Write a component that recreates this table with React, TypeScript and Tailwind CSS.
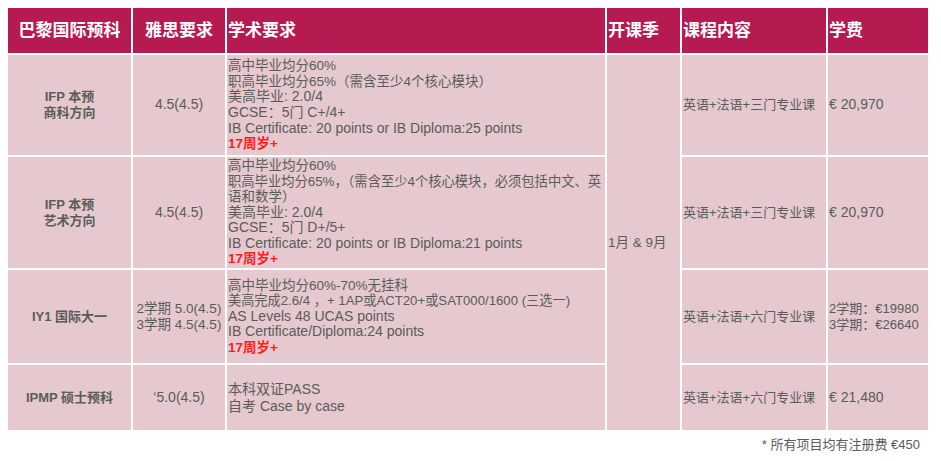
import React from "react";

const font = { fontFamily: '"Liberation Sans", "Noto Sans CJK SC", sans-serif' };

function Red() {
  return <div className="font-bold text-[13.5px] text-[#ff1c1c]">17周岁+</div>;
}

export default function App() {
  const th = "bg-[#b51a50] text-white text-[17px] font-bold align-middle p-0 px-px";
  const td = "bg-[#e6c9ce] text-[#5b5b5b] text-[13.5px] align-middle p-0";

  return (
    <div className="w-[941px] h-[461px] bg-white pl-[6px] pt-[6px]" style={font}>
      <table className="table-fixed border-separate border-spacing-[2px] w-[924px]">
        <colgroup>
          <col className="w-[123px]" />
          <col className="w-[92px]" />
          <col className="w-[378px]" />
          <col className="w-[73px]" />
          <col className="w-[144px]" />
          <col className="w-[100px]" />
        </colgroup>
        <thead>
          <tr className="h-[45px]">
            <th className={`${th} text-center`}>巴黎国际预科</th>
            <th className={`${th} text-center`}>雅思要求</th>
            <th className={`${th} text-left`}>学术要求</th>
            <th className={`${th} text-left`}>开课季</th>
            <th className={`${th} text-left`}>课程内容</th>
            <th className={`${th} text-left`}>学费</th>
          </tr>
        </thead>
        <tbody className="leading-[15.6px]">
          <tr className="h-[100px]">
            <td className={`${td} text-center font-bold text-[13px]`}>
              IFP 本预
              <br />
              商科方向
            </td>
            <td className={`${td} text-center text-[14px]`}>4.5(4.5)</td>
            <td className={`${td} px-px whitespace-nowrap`}>
              <div>高中毕业均分60%</div>
              <div>职高毕业均分65%（需含至少4个核心模块）</div>
              <div className="text-[14px]">美高毕业: 2.0/4</div>
              <div className="text-[14px]">GCSE：5门 C+/4+</div>
              <div className="text-[14px]">IB Certificate: 20 points or IB Diploma:25 points</div>
              <Red />
            </td>
            <td className={`${td} px-px`} rowSpan={4}>
              1月 &amp; 9月
            </td>
            <td className={`${td} px-px text-[13px]`}>英语+法语+三门专业课</td>
            <td className={`${td} px-px text-[14px]`}>€ 20,970</td>
          </tr>
          <tr className="h-[111px]">
            <td className={`${td} text-center font-bold text-[13px]`}>
              IFP 本预
              <br />
              艺术方向
            </td>
            <td className={`${td} text-center text-[14px]`}>4.5(4.5)</td>
            <td className={`${td} px-px whitespace-nowrap`}>
              <div>高中毕业均分60%</div>
              <div className="text-[13.3px]">职高毕业均分65%，（需含至少4个核心模块，必须包括中文、英</div>
              <div>语和数学）</div>
              <div className="text-[14px]">美高毕业: 2.0/4</div>
              <div className="text-[14px]">GCSE：5门 D+/5+</div>
              <div className="text-[14px]">IB Certificate: 20 points or IB Diploma:21 points</div>
              <Red />
            </td>
            <td className={`${td} px-px text-[13px]`}>英语+法语+三门专业课</td>
            <td className={`${td} px-px text-[14px]`}>€ 20,970</td>
          </tr>
          <tr className="h-[93px]">
            <td className={`${td} text-center font-bold text-[13px]`}>IY1 国际大一</td>
            <td className={`${td} text-center`}>
              2学期 5.0(4.5)
              <br />
              3学期 4.5(4.5)
            </td>
            <td className={`${td} px-px whitespace-nowrap`}>
              <div>高中毕业均分60%-70%无挂科</div>
              <div className="text-[13.2px]">美高完成2.6/4 ，+ 1AP或ACT20+或SAT000/1600 (三选一)</div>
              <div className="text-[14px]">AS Levels 48 UCAS points</div>
              <div className="text-[14px]">IB Certificate/Diploma:24 points</div>
              <Red />
            </td>
            <td className={`${td} px-px text-[13px]`}>英语+法语+六门专业课</td>
            <td className={`${td} px-px text-[13px]`}>
              2学期：€19980
              <br />
              3学期：€26640
            </td>
          </tr>
          <tr className="h-[65px]">
            <td className={`${td} text-center font-bold text-[13px]`}>IPMP 硕士预科</td>
            <td className={`${td} text-center text-[14px]`}>‘5.0(4.5)</td>
            <td className={`${td} px-px leading-[16.5px] text-[14px]`}>
              <div>本科双证PASS</div>
              <div>自考 Case by case</div>
            </td>
            <td className={`${td} px-px text-[13px]`}>英语+法语+六门专业课</td>
            <td className={`${td} px-px text-[14px]`}>€ 21,480</td>
          </tr>
        </tbody>
      </table>
      <div className="w-[914px] text-right text-[13px] text-[#5b5b5b] mt-[3px]">* 所有项目均有注册费 €450</div>
    </div>
  );
}
